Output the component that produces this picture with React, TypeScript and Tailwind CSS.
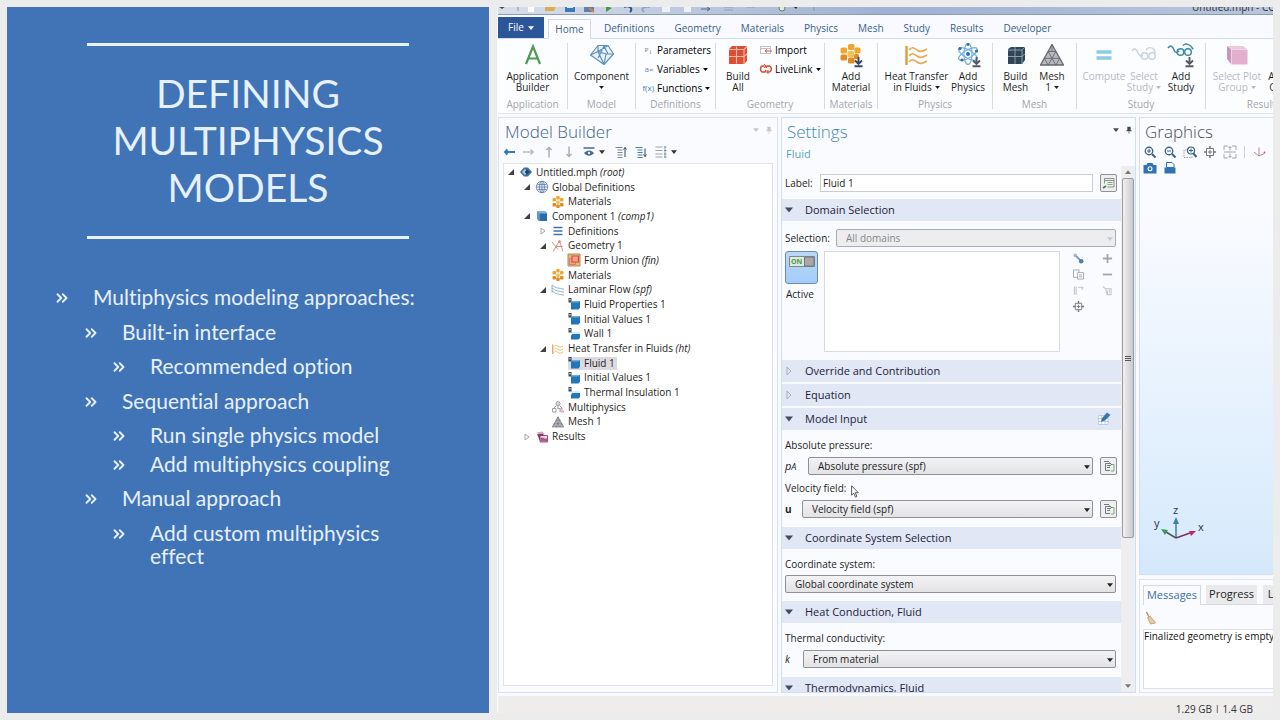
import type { ReactNode } from 'react';
import { ChevronsRight } from 'lucide-react';
import clsx from 'clsx';

type IconName = keyof typeof ICONS;

const ICONS = {
  builder: (
    <path d="M5 21 12 3.5 19 21M7.5 15.5h9" fill="none" stroke="#4f9a55" strokeWidth="2.2" />
  ),
  component: (
    <g fill="#eaf3fc" stroke="#5f8fbd" strokeWidth="1.2" strokeLinejoin="round">
      <path d="M.5 12 8 2.500h10L23.500 11 14 21.500z" />
      <path d="M.5 12 8 8.500l8 2.500 7.500 0M8 8.500 18 2.500M16 11l-2 10.500M8 8.500v0L14 21.500M8 2.500l0 6M8 15l6-12 4 8" fill="none" />
    </g>
  ),
  buildAll: (
    <g>
      <path d="M3 6l3-3h15v15l-3 3H3z" fill="#dd4f34" />
      <path d="M3 6.500h15M18 6.500v14.500M18 6.500l3-3M10.500 3.500v17M3 13.500h15l3-2.500" stroke="#f7b7a5" strokeWidth="1.1" fill="none" />
    </g>
  ),
  addMaterial: (
    <g>
      <g fill="#f0a52c">
        <rect x="9" y="1" width="6.500" height="6" rx="1.500" />
        <rect x="1.500" y="4.500" width="6.500" height="6" rx="1.500" />
        <rect x="15.500" y="4.500" width="6" height="6" rx="1.500" />
        <rect x="1.500" y="11.500" width="6.500" height="6" rx="1.500" fill="#e48a22" />
        <rect x="9" y="14.500" width="6.500" height="6" rx="1.500" fill="#e48a22" />
        <rect x="15" y="11" width="5" height="5" rx="1.500" fill="#e48a22" />
        <rect x="8.500" y="8" width="6.500" height="6" rx="1.500" fill="#f6c04d" />
      </g>
      <path d="M19.500 14v6M16 17.500l3.500 3.500 3.500-3.500M15.500 23.200h8" stroke="#36475f" strokeWidth="1.900" fill="none" />
    </g>
  ),
  heat: (
    <g fill="none" stroke="#e6ab4f" strokeWidth="1.600">
      <path d="M1.500 3v19" strokeWidth="2.400" stroke="#dc9d3c" />
      <path d="M4 7c3-4 5-2 8 0s5 2 10-1M4 13c3-4 5-2 8 0s5 2 10-1M4 19c3-4 5-2 8 0s5 2 10-1" />
    </g>
  ),
  addPhysics: (
    <g fill="none" stroke="#6fb0dc" strokeWidth="1.200">
      <ellipse cx="12" cy="11" rx="4" ry="10.500" />
      <ellipse cx="12" cy="11" rx="4" ry="10.500" transform="rotate(60 12 11)" />
      <ellipse cx="12" cy="11" rx="4" ry="10.500" transform="rotate(120 12 11)" />
      <g fill="#2f6ea8" stroke="none">
        <circle cx="12" cy="11" r="2" />
        <circle cx="4" cy="5.500" r="1.600" />
        <circle cx="20.500" cy="8" r="1.600" />
        <circle cx="6" cy="17" r="1.600" />
        <circle cx="12" cy="1.500" r="1.400" />
      </g>
      <path d="M20.500 14v6M17 17.500l3.500 3.500 3.500-3.500M16.500 23.200h8" stroke="#55585f" strokeWidth="1.900" />
    </g>
  ),
  buildMesh: (
    <g>
      <path d="M4 6l3-2h14v13l-3 4H4z" fill="#304657" />
      <path d="M4 7h14v14M18 7l3-3M11 4v17M4 13.500h14l3-2.500" stroke="#8fa6b5" strokeWidth="0.900" fill="none" />
    </g>
  ),
  mesh: (
    <g stroke="#66666e" strokeWidth="0.900" strokeLinejoin="round">
      <path d="M12 1.500 23.500 22H.5z" fill="#b9b9c1" strokeWidth="1.300" />
      <path d="M8.200 8.500h7.600M4.300 15.300h15.400M8.200 8.500 12 15.300l3.800-6.800M4.300 15.300 8.200 22l3.800-6.700 3.800 6.700 3.900-6.700M12 1.500v7" fill="none" />
    </g>
  ),
  compute: <path d="M4.500 9h15M4.500 15h15" stroke="#8fcbe2" strokeWidth="3.400" fill="none" />,
  selectStudy: (
    <g fill="none" stroke="#c9d3dd" strokeWidth="1.400">
      <path d="M0 8c3-4 5-1 6 2s3 4 5 2" />
      <circle cx="12.500" cy="13" r="3.200" />
      <circle cx="20" cy="13" r="3.200" />
      <path d="M14 7c2-3 5-3 8-1l1 4" />
    </g>
  ),
  addStudy: (
    <g fill="none" stroke="#3d8aa5" strokeWidth="1.500">
      <path d="M-1 5c3-4 5-1 6 2s3 3 5 1" />
      <circle cx="11.500" cy="9" r="3.300" />
      <circle cx="19" cy="9" r="3.300" />
      <path d="M14 2.500c2-2 4-2 7 0s2 4 3.500 3" />
      <path d="M20.500 14v6M17 17.500l3.500 3.500 3.500-3.500M16.500 23.200h8" stroke="#55585f" strokeWidth="1.900" />
    </g>
  ),
  plotGroup: (
    <g>
      <path d="M2 3l4 3v15l-4-5z" fill="#cf93ba" />
      <path d="M2 3h16l4 3H6z" fill="#edc9de" />
      <path d="M6.500 6.500H22.500V21.500H6.500z" fill="#e2afcf" />
    </g>
  ),
  params: (
    <g fontFamily="Liberation Serif" fontSize="17" fill="#77869a">
      <text x="1" y="17">P</text>
      <text x="13" y="21" fontSize="15">i</text>
    </g>
  ),
  importFile: (
    <g fill="none" strokeWidth="1.500">
      <path d="M1 5h20v14H1zM1 9h20" stroke="#b9a7ad" />
      <path d="M10 14h14M14 11l-4 3 4 3" stroke="#cf5a55" strokeWidth="2" />
    </g>
  ),
  livelink: (
    <g fill="none" stroke="#d64a35" strokeWidth="3">
      <path d="M9 6H4c-4 2-4 10 0 12h6l2-4M12 10l2-4h5c5 2 5 10 0 12h-5" />
      <path d="M8 2l4 4-4 4M17 14l-4 4 4 4" strokeWidth="2" />
    </g>
  ),
  root: (
    <g>
      <path d="M0 12 8 3h8l8 9-8 9H8z" fill="#3d6f9f" />
      <path d="M4 12l6-6 3 3-3 3 3 3-3 3z" fill="#a9cdea" />
      <path d="M13 7l6 5-6 5-3-5z" fill="#1f3f63" />
    </g>
  ),
  globe: (
    <g fill="none" stroke="#5f7fae" strokeWidth="1.600">
      <circle cx="12" cy="12" r="11.500" fill="#eaf1fa" />
      <ellipse cx="12" cy="12" rx="5" ry="11.500" />
      <path d="M12 .5v23M.5 12h23M3 7h18M3 17h18" />
    </g>
  ),
  materials: (
    <g fill="#f0a52c">
      <rect x="8.500" y="0" width="7" height="7" rx="2" />
      <rect x="1" y="4" width="7" height="7" rx="2" />
      <rect x="16" y="4" width="7" height="7" rx="2" />
      <rect x="8.500" y="9" width="7" height="7" rx="2" fill="#f6c04d" />
      <rect x="1" y="14" width="7" height="7" rx="2" fill="#e48a22" />
      <rect x="16" y="14" width="7" height="7" rx="2" fill="#e48a22" />
      <rect x="8.500" y="17" width="7" height="7" rx="2" fill="#e48a22" />
    </g>
  ),
  cube: (
    <g>
      <path d="M2 2h16l4 3v17H6l-4-4z" fill="#7db4df" />
      <path d="M2 2l4 4v16l-4-4z" fill="#5b9acb" />
      <path d="M7 7h15v15H7z" fill="#2c6ba6" />
    </g>
  ),
  lines: <path d="M3 5h18M3 12h18M3 19h18" stroke="#3c74a8" strokeWidth="3.400" fill="none" />,
  geometry: (
    <g fill="none" stroke="#d87a70" strokeWidth="1.700">
      <path d="M0 4l12 15M2 23 15 2l7 21M8 13h13" />
      <circle cx="15" cy="3" r="2" />
    </g>
  ),
  union: (
    <g>
      <path d="M0 0h24v24H0z" fill="#e3b679" stroke="#a8905f" strokeWidth="2" />
      <path d="M3 9h12v12H3z" fill="#f3a08b" stroke="#e0705a" strokeWidth="1.600" />
      <path d="M8 4h13v12H8z" fill="#f3a08b" stroke="#d8503c" strokeWidth="2.400" />
    </g>
  ),
  laminar: (
    <g fill="none" stroke="#86a9d1" strokeWidth="1.800">
      <path d="M0 3c5 0 6 5 11 5s6 2 13 2M0 9c5 0 6 5 11 5s6 2 13 2M0 15c5 0 6 5 11 5s6 2 13 2M0 3v14" />
    </g>
  ),
  domain: (
    <g>
      <path d="M6 9l3-3h15v13l-3 4H6z" fill="#2277b8" />
      <path d="M6 9l3-3h15l-3 3z" fill="#69addd" />
      <path d="M1 0h6v9H1zM3 2h2v3H3z" fill="#34465c" fillRule="evenodd" />
    </g>
  ),
  boundary: (
    <g>
      <path d="M6 8h18v8H6z" fill="#d9ebf7" />
      <path d="M6 15l3-3h15v8l-3 3H6z" fill="#2277b8" />
      <path d="M1 0h6v9H1zM3 2h2v3H3z" fill="#34465c" fillRule="evenodd" />
    </g>
  ),
  multi: (
    <g fill="none" stroke="#8b8b93" strokeWidth="1.600">
      <circle cx="12" cy="5" r="4" fill="#d5e3cf" />
      <path d="M9 9 3 15M15 9l6 6M12 9v6" />
      <path d="M1 15l7 0 0 7H1zM11 15h5v7" />
      <path d="M18 14v8h6z" stroke="#c77fa3" />
    </g>
  ),
  results: (
    <g>
      <path d="M1 3l12-2 4 5H5z" fill="#d9a4c3" />
      <path d="M2 6h13v14l-8-2z" fill="#8d3b6b" />
      <path d="M8 9h15v13H8z" fill="#e8d3e0" stroke="#75305a" strokeWidth="1.600" />
      <path d="M9 15c4-6 8 4 13-1v7H9z" fill="#b0568a" />
    </g>
  ),
  back: <path d="M24 12H3M9 7l-5 5 5 5" stroke="#3878b5" strokeWidth="4" fill="none" />,
  forward: <path d="M0 12h21M15 7l5 5-5 5" stroke="#b9bec6" strokeWidth="3.400" fill="none" />,
  up: <path d="M12 23V3M7 8l5-5 5 5" stroke="#aab0ba" strokeWidth="3" fill="none" />,
  down: <path d="M12 1v20M7 16l5 5 5-5" stroke="#aab0ba" strokeWidth="3" fill="none" />,
  eye: (
    <g>
      <path d="M1 4h22" stroke="#44698f" strokeWidth="3" />
      <path d="M2 14c6-7 14-7 20 0-6 7-14 7-20 0z" fill="#44698f" />
      <circle cx="12" cy="14" r="2.500" fill="#dfe9f4" />
    </g>
  ),
  collapse: (
    <g stroke="#7b8796" strokeWidth="2" fill="none">
      <path d="M1 3h14M5 8h10M5 13h10M5 18h10M5 23h10" />
      <path d="M20 22V3M17 7l3-4 3 4" stroke="#33475e" />
    </g>
  ),
  expand: (
    <g stroke="#3f7fb9" strokeWidth="2.400" fill="none">
      <path d="M1 3h14M5 8h10M5 13h10M5 18h10M5 23h10" />
      <path d="M20 5v16M17 17l3 4 3-4" stroke="#33475e" strokeWidth="2" />
    </g>
  ),
  columns: (
    <g stroke="#9299a5" strokeWidth="1.800" fill="none">
      <path d="M1 2h14M1 9h14M1 16h14M1 22h14M20 1v22" />
      <path d="M18 2h5M18 9h5M18 16h5M18 22h5" stroke="#5f7f9f" />
    </g>
  ),
  zoomIn: (
    <g fill="none" stroke="#3c5f87" strokeWidth="2.600">
      <circle cx="10" cy="10" r="7.500" />
      <path d="M16 16l7 7" strokeWidth="4" />
      <path d="M6 10h8M10 6v8" strokeWidth="2" />
    </g>
  ),
  zoomOut: (
    <g fill="none" stroke="#3c5f87" strokeWidth="2.600">
      <circle cx="10" cy="10" r="7.500" />
      <path d="M16 16l7 7" strokeWidth="4" />
      <path d="M6 10h8" strokeWidth="2" />
    </g>
  ),
  zoomBox: (
    <g fill="none" stroke="#3c5f87" strokeWidth="2.400">
      <path d="M5 8H0v15h16v-3" stroke="#7d8a99" strokeWidth="1.600" strokeDasharray="3 2" />
      <circle cx="14" cy="9" r="7" />
      <path d="M19 15l6 7" strokeWidth="4" />
      <path d="M10 9h8M14 5v8" strokeWidth="2" />
    </g>
  ),
  extents: (
    <g fill="none" stroke="#6d7178" strokeWidth="1.900">
      <path d="M5 5h14v14H5zM12 8v8M8 12h8" />
      <path d="M12 0v5M12 19v5M0 12h5M19 12h5" strokeWidth="3" />
    </g>
  ),
  fit: (
    <g fill="none" stroke="#8e9299" strokeWidth="1.600">
      <path d="M8 0H0v8M16 0h8v8M8 24H0v-8M16 24h8v-8M12 1v8M12 15v8M0 12h24M9 4l3-3 3 3M9 20l3 3 3-3" />
    </g>
  ),
  triad: (
    <g fill="none" stroke="#a0707c" strokeWidth="1.600">
      <path d="M12 20V3M12 20 2 12M12 20l11-5" />
      <circle cx="23" cy="13" r="1.800" fill="#d0566a" stroke="none" />
    </g>
  ),
  camera: (
    <g>
      <path d="M-1 6h6l2-4h10l2 4h6v17H-1z" fill="#2f73b4" />
      <circle cx="12" cy="13.500" r="5" fill="#fff" />
      <circle cx="12" cy="13.500" r="2.800" fill="#2f73b4" />
    </g>
  ),
  printer: (
    <g fill="#2f73b4">
      <path d="M5 1h11l4 4v6H5z" fill="#fff" stroke="#2f73b4" strokeWidth="2" />
      <path d="M1 11h22v12H1z" />
    </g>
  ),
  rename: (
    <g fill="none" stroke="#7e8b80" strokeWidth="1.800">
      <path d="M3 3h19v17H9M3 3v10M3 7h19" />
      <path d="M9 11h10M9 15h10" stroke="#71a96c" />
      <path d="M0 22l6-4" stroke="#4a7a4a" strokeWidth="3.400" />
    </g>
  ),
  goTo: (
    <g fill="none" stroke="#6d7178" strokeWidth="1.900">
      <path d="M2 3h10M5 7h9M8 11h6M8 15h6M5 21h9M5 7v14" />
      <path d="M16 9h6v13h-6" stroke="#6dab68" />
      <path d="M13 5l4 4-4 3" stroke="#44784a" />
    </g>
  ),
  paint: (
    <g>
      <circle cx="5" cy="5" r="4" fill="#a9b8c9" />
      <path d="M7 7l9 9" stroke="#7895b5" strokeWidth="4" />
      <circle cx="18" cy="18" r="5" fill="#4d7eb0" />
    </g>
  ),
  copy: (
    <g fill="#fff" stroke="#8a8f97" strokeWidth="1.600">
      <path d="M1 2h12v16H1z" />
      <path d="M10 8h13v14H10zM13 13h7M13 17h7" />
    </g>
  ),
  paste: (
    <g fill="none" stroke="#c3c6cc" strokeWidth="2.400">
      <path d="M3 3v18M7 3v18M11 5h12M20 5v6" />
    </g>
  ),
  plus: <path d="M12 2v20M2 12h20" stroke="#a4a7ad" strokeWidth="4" fill="none" />,
  minus: <path d="M2 12h20" stroke="#a4a7ad" strokeWidth="4" fill="none" />,
  broomOff: (
    <g fill="none" stroke="#c3c6cc" strokeWidth="2.200">
      <path d="M2 3l6 6M8 8h12v13h-9zM12 12v8M16 10v8" />
    </g>
  ),
  broom: (
    <g>
      <path d="M3 0l5 10" stroke="#a88b76" strokeWidth="2.400" />
      <path d="M5 11l5-3 11 14-10 2z" fill="#e8c9a6" stroke="#b78b62" strokeWidth="1.400" />
    </g>
  ),
  edit: (
    <g>
      <path d="M1 5h19v18H1zM1 11h19M1 17h19M7 5v18M14 5v18" fill="#fff" stroke="#9dbfdf" strokeWidth="1.400" />
      <path d="M6 18l2-8L18-1l7 5-11 11z" fill="#3c76ad" />
    </g>
  ),
  pin: <path d="M7 2h10v11h3v3h-7v7h-2v-7H4v-3h3z" fill="currentColor" />,
} satisfies Record<string, ReactNode>;

function Icon({ name, className }: { name: IconName; className?: string }) {
  return (
    <svg viewBox="0 0 24 24" aria-hidden="true" className={clsx('shrink-0 overflow-visible', className)}>
      {ICONS[name]}
    </svg>
  );
}

function Caret({ className }: { className?: string }) {
  return (
    <svg viewBox="0 0 8 5" aria-hidden="true" className={clsx('inline-block shrink-0', className)}>
      <path d="M0 0h8L4 5z" fill="currentColor" />
    </svg>
  );
}

/* ---------- slide ---------- */

const BULLETS = [
  { text: 'Multiphysics modeling approaches:', cls: 'pl-[46px]' },
  { text: 'Built-in interface', cls: 'pl-[75px] mt-3' },
  { text: 'Recommended option', cls: 'pl-[103px] mt-[11px]' },
  { text: 'Sequential approach', cls: 'pl-[75px] mt-3' },
  { text: 'Run single physics model', cls: 'pl-[103px] mt-[11px]' },
  { text: 'Add multiphysics coupling', cls: 'pl-[103px] mt-1.5' },
  { text: 'Manual approach', cls: 'pl-[75px] mt-[11px]' },
  { text: 'Add custom multiphysics effect', cls: 'pl-[103px] mt-3' },
];

function Slide() {
  return (
    <section className="w-[482px] shrink-0 bg-[#4173b7] pt-9 font-['Lato',sans-serif] text-[#e6f1fd] [font-variant-ligatures:none]">
      <h1 className="mx-20 border-y-[3px] border-[#e6f1fd] px-2 pt-6 pb-[25px] text-center text-[39px] leading-[47px] uppercase">
        Defining Multiphysics Models
      </h1>
      <ul className="mt-[46px] pr-[62px] text-[21px] leading-[23px]">
        {BULLETS.map((b) => (
          <li key={b.text} className={clsx('flex items-start', b.cls)}>
            <ChevronsRight className="mt-1 mr-[22px] size-[18px] shrink-0" strokeWidth={2.5} />
            <span>{b.text}</span>
          </li>
        ))}
      </ul>
    </section>
  );
}

/* ---------- ribbon ---------- */

const TABS = ['Definitions', 'Geometry', 'Materials', 'Physics', 'Mesh', 'Study', 'Results', 'Developer'];

function TitleBar() {
  return (
    <div className="flex h-2 items-end justify-between overflow-hidden border-b border-[#8b9bb5] bg-linear-to-r from-[#d9dfe9] via-[#9fb0d2] to-[#b9c6dd]">
      <svg viewBox="0 0 320 8" className="h-2 w-[320px]" aria-hidden="true">
        <path d="M0 0h8l-4 3z" fill="#444" />
        <path d="M20 0v5M316 0v5" stroke="#8894a8" />
        <path d="M30 0h6v6h-6z" fill="#fff" />
        <path d="M47 0h11l-2 5h-9z" fill="#e0ab4c" />
        <path d="M67 0h10v6H67z" fill="#3c79b8" />
        <path d="M69 0h6v2h-6z" fill="#dce9f6" />
        <path d="M86 0h10v6H86z" fill="#5b83ad" />
        <path d="M91 2l5 4" stroke="#d9803c" strokeWidth="2" />
        <path d="M108 0l6 2-6 4z" fill="#459a45" />
        <path d="M126 1c4-2 10 1 6 5" stroke="#31507c" strokeWidth="2" fill="none" />
        <path d="M152 1c-6-1-10 2-6 5" stroke="#8fa3c2" strokeWidth="2" fill="none" />
        <path d="M164 0h8v6h-8zM186 0h7v6h-7z" fill="#eef2f8" />
        <path d="M203 3h9M209 1l3 2-3 2" stroke="#5a6779" fill="none" />
        <path d="M226 1h9M248 1h9M226 4h9" stroke="#8fa0ba" />
        <circle cx="284" cy="2" r="3" fill="#dcebd9" stroke="#5d8a5a" />
        <path d="M295 0h5l-2 3z" fill="#222" />
      </svg>
      <span className="mr-[-12px] text-[10px] leading-[14px] whitespace-nowrap text-[#333]">Untitled.mph - COM</span>
    </div>
  );
}

function RibbonTabs() {
  return (
    <nav className="flex h-6 items-end border-b border-[#d5d9e3] text-[10px] text-[#3b5f8a]">
      <button className="mr-1 flex h-[21px] w-[46px] shrink-0 items-center justify-center gap-1 bg-[#2b569a] text-white">
        File <Caret className="h-1 w-1.5" />
      </button>
      <button className="-mb-px h-5 w-[43px] shrink-0 border border-b-0 border-[#d5d9e3] bg-[#fdfdff]">Home</button>
      <div className="ml-[13px] flex h-[19px] items-center gap-5">
        {TABS.map((t) => (
          <button key={t}>{t}</button>
        ))}
      </div>
    </nav>
  );
}

function Group({ label, width, children }: { label: string; width: string; children: ReactNode }) {
  return (
    <div className={clsx('flex h-[66px] shrink-0 flex-col border-r border-[#d8dbe3]', width)}>
      <div className="flex h-[54px] shrink-0">{children}</div>
      <div className="text-center text-[10px] leading-[14px] text-[#a3a5ab]">{label}</div>
    </div>
  );
}

type BigProps = { icon: IconName; lines: string[]; width: string; caret?: boolean; disabled?: boolean };

function BigButton({ icon, lines, width, caret, disabled }: BigProps) {
  return (
    <button
      disabled={disabled}
      className={clsx('flex shrink-0 flex-col items-center leading-[11px] whitespace-nowrap', width, disabled ? 'text-[#b6b9c0]' : 'text-[#1e1e22]')}
    >
      <Icon name={icon} className="mb-1 size-6" />
      {lines.map((line, i) => (
        <span key={line} className="flex min-h-[11px] items-center gap-[3px]">
          {line}
          {caret && i === lines.length - 1 && <Caret className="h-[3px] w-[5px]" />}
        </span>
      ))}
    </button>
  );
}

function Ribbon() {
  return (
    <div className="flex h-[75px] overflow-hidden border-b border-[#dfe3ec] bg-[#fcfdff] pt-1 text-[10px]">
      <Group label="Application" width="w-[70px]">
        <BigButton icon="builder" lines={['Application', 'Builder']} width="w-full" />
      </Group>
      <Group label="Model" width="w-[68px]">
        <BigButton icon="component" lines={['Component', '']} caret width="w-full" />
      </Group>
      <Group label="Definitions" width="w-20">
        <div className="flex flex-col gap-[5px] pl-2 leading-[14px]">
          <button className="flex items-center gap-[3px]">
            <Icon name="params" className="size-[10px]" /> Parameters
          </button>
          <button className="flex items-center gap-[3px]">
            <span className="w-[10px] text-[8px] text-[#6f8cad]">a=</span> Variables <Caret className="h-[3px] w-[5px]" />
          </button>
          <button className="flex items-center gap-[3px]">
            <span className="flex w-[10px] justify-end text-[8px] text-[#4f79a5]">f(x)</span> Functions
            <Caret className="h-[3px] w-[5px]" />
          </button>
        </div>
      </Group>
      <Group label="Geometry" width="w-[109px]">
        <BigButton icon="buildAll" lines={['Build', 'All']} width="w-11" />
        <div className="flex flex-col gap-[5px] leading-[14px]">
          <button className="flex items-center gap-[3px]">
            <Icon name="importFile" className="size-3" /> Import
          </button>
          <button className="flex items-center gap-[3px]">
            <Icon name="livelink" className="size-3" /> LiveLink <Caret className="h-[3px] w-[5px]" />
          </button>
        </div>
      </Group>
      <Group label="Materials" width="w-[53px]">
        <BigButton icon="addMaterial" lines={['Add', 'Material']} width="w-full" />
      </Group>
      <Group label="Physics" width="w-[115px]">
        <BigButton icon="heat" lines={['Heat Transfer', 'in Fluids']} caret width="ml-1 w-[69px]" />
        <BigButton icon="addPhysics" lines={['Add', 'Physics']} width="w-[34px]" />
      </Group>
      <Group label="Mesh" width="w-[84px]">
        <BigButton icon="buildMesh" lines={['Build', 'Mesh']} width="w-[45px]" />
        <BigButton icon="mesh" lines={['Mesh', '1']} caret width="w-7" />
      </Group>
      <Group label="Study" width="w-[129px]">
        <BigButton icon="compute" lines={['Compute']} disabled width="w-[54px]" />
        <BigButton icon="selectStudy" lines={['Select', 'Study']} caret disabled width="w-[26px]" />
        <BigButton icon="addStudy" lines={['Add', 'Study']} width="w-12" />
      </Group>
      <Group label="Results" width="w-[116px]">
        <BigButton icon="plotGroup" lines={['Select Plot', 'Group']} caret disabled width="w-[62px]" />
        <BigButton icon="plotGroup" lines={['Add Plot', 'Group']} caret width="w-10" />
      </Group>
    </div>
  );
}

/* ---------- model builder ---------- */

type Node = { depth: 0 | 1 | 2 | 3; icon: IconName; label: string; tag?: string; open?: boolean; selected?: boolean };

const NODES: Node[] = [
  { depth: 0, icon: 'root', label: 'Untitled.mph', tag: 'root', open: true },
  { depth: 1, icon: 'globe', label: 'Global Definitions', open: true },
  { depth: 2, icon: 'materials', label: 'Materials' },
  { depth: 1, icon: 'cube', label: 'Component 1', tag: 'comp1', open: true },
  { depth: 2, icon: 'lines', label: 'Definitions', open: false },
  { depth: 2, icon: 'geometry', label: 'Geometry 1', open: true },
  { depth: 3, icon: 'union', label: 'Form Union', tag: 'fin' },
  { depth: 2, icon: 'materials', label: 'Materials' },
  { depth: 2, icon: 'laminar', label: 'Laminar Flow', tag: 'spf', open: true },
  { depth: 3, icon: 'domain', label: 'Fluid Properties 1' },
  { depth: 3, icon: 'domain', label: 'Initial Values 1' },
  { depth: 3, icon: 'boundary', label: 'Wall 1' },
  { depth: 2, icon: 'heat', label: 'Heat Transfer in Fluids', tag: 'ht', open: true },
  { depth: 3, icon: 'domain', label: 'Fluid 1', selected: true },
  { depth: 3, icon: 'domain', label: 'Initial Values 1' },
  { depth: 3, icon: 'boundary', label: 'Thermal Insulation 1' },
  { depth: 2, icon: 'multi', label: 'Multiphysics' },
  { depth: 2, icon: 'mesh', label: 'Mesh 1' },
  { depth: 1, icon: 'results', label: 'Results', open: false },
];

const INDENT = ['pl-[3px]', 'pl-[19px]', 'pl-[35px]', 'pl-[51px]'];

function Toggle({ open }: { open?: boolean }) {
  if (open === undefined) return <span className="w-2" />;
  return (
    <button aria-label={open ? 'Collapse' : 'Expand'} className="w-2">
      <svg viewBox="0 0 8 8" className="size-2">
        {open ? <path d="M7 1v6H1z" fill="#404040" /> : <path d="M2 1l4 3-4 3z" fill="none" stroke="#a5a5a5" />}
      </svg>
    </button>
  );
}

function ModelBuilder() {
  return (
    <section className="flex w-[280px] shrink-0 flex-col border border-[#d9e1ee] bg-[#fafbff] px-1 pb-1.5">
      <header className="flex items-start justify-between pt-0.5 text-[#c3c6cc]">
        <h2 className="pl-0.5 text-[17px] leading-6 font-light text-[#3f6389]">Model Builder</h2>
        <div className="flex items-center gap-1.5 pt-1.5">
          <Caret className="h-1 w-1.5" />
          <Icon name="pin" className="size-2" />
        </div>
      </header>
      <div className="mb-[3px] flex h-4 items-center gap-2 text-[#333]">
        <Icon name="back" className="size-3" />
        <Icon name="forward" className="size-3" />
        <Icon name="up" className="size-3" />
        <Icon name="down" className="size-3" />
        <Icon name="eye" className="size-3" />
        <Caret className="mr-0.5 -ml-1 h-1 w-1.5" />
        <Icon name="collapse" className="size-3" />
        <Icon name="expand" className="size-3" />
        <Icon name="columns" className="size-3" />
        <Caret className="-ml-1 h-1 w-1.5" />
      </div>
      <div className="flex-1 border border-[#e0e3ea] bg-white pt-px">
        <ul className="grid h-[279px] auto-rows-fr text-[10px] text-[#1e1e22]">
          {NODES.map((n, i) => (
            <li key={i} className={clsx('flex items-center', INDENT[n.depth])}>
              <Toggle open={n.open} />
              <span className={clsx('ml-[5px] flex items-center gap-1 pr-0.5', n.selected && 'bg-[#dcd9e1]')}>
                <Icon name={n.icon} className="size-3" />
                <span className="leading-[13px] whitespace-nowrap">
                  {n.label} {n.tag && <i>({n.tag})</i>}
                </span>
              </span>
            </li>
          ))}
        </ul>
      </div>
    </section>
  );
}

/* ---------- settings ---------- */

function SectionHeader({ title, open, children }: { title: string; open?: boolean; children?: ReactNode }) {
  return (
    <button className="flex h-[22px] w-full shrink-0 items-center bg-[#e1e7f5] pr-[11px] pl-[3px] text-[11px] text-[#22223a]">
      <svg viewBox="0 0 8 8" className="mr-3 size-2" aria-hidden="true">
        {open ? <path d="M0 1.500h8L4 6.500z" fill="#3f4c63" /> : <path d="M2 0l4 4-4 4z" fill="none" stroke="#b0aebf" />}
      </svg>
      <span className="flex-1 text-left">{title}</span>
      {children}
    </button>
  );
}

function Select({ id, value, disabled }: { id: string; value: string; disabled?: boolean }) {
  return (
    <span className="relative flex h-[18px] min-w-0 flex-1 text-[#222]">
      <select
        id={id}
        disabled={disabled}
        className={clsx(
          'w-full appearance-none rounded-[2px] border pl-[9px] leading-4',
          disabled ? 'border-[#a9acb2] bg-[#ededf0] text-[#85868b]' : 'border-[#8f9197] bg-linear-to-b from-[#f3f2f5] to-[#e3e3e6]',
        )}
      >
        <option>{value}</option>
      </select>
      <Caret className={clsx('pointer-events-none absolute top-2 right-[3px] h-1 w-1.5', disabled && 'text-[#c9cacf]')} />
    </span>
  );
}

function ToolButton({ icon, label }: { icon: IconName; label: string }) {
  return (
    <button
      aria-label={label}
      className="ml-[7px] flex h-[18px] w-[17px] shrink-0 items-center justify-center rounded-[2px] border border-[#8f9197] bg-[#efeff1]"
    >
      <Icon name={icon} className="size-3" />
    </button>
  );
}

const SELECTION_TOOLS: { icon: IconName; label: string }[] = [
  { icon: 'paint', label: 'Create selection' },
  { icon: 'plus', label: 'Add' },
  { icon: 'copy', label: 'Copy' },
  { icon: 'minus', label: 'Remove' },
  { icon: 'paste', label: 'Paste' },
  { icon: 'broomOff', label: 'Clear' },
  { icon: 'extents', label: 'Zoom to selection' },
];

function Settings() {
  return (
    <section className="relative flex w-[355px] shrink-0 flex-col overflow-hidden border border-[#cfdff0] bg-[#fafbff] text-[10px] text-[#1e1e22]">
      <header className="flex items-start justify-between px-[5px] pt-0.5">
        <h2 className="text-[17px] leading-6 font-light text-[#3e89a8]">Settings</h2>
        <div className="flex items-center gap-1.5 pt-1.5 text-[#444b55]">
          <Caret className="h-1 w-1.5" />
          <Icon name="pin" className="mr-[-3px] size-2" />
        </div>
      </header>
      <p className="mb-[3px] px-1 text-[11px] leading-[19px] text-[#5aa3bd]">Fluid</p>
      <div className="flex min-h-0 flex-1">
        <div className="flex min-w-0 flex-1 flex-col overflow-hidden">
          <div className="flex items-center pt-2 pr-1 pb-[7px] pl-[3px]">
            <label htmlFor="label" className="w-[35px]">
              Label:
            </label>
            <input id="label" defaultValue="Fluid 1" className="h-[18px] min-w-0 flex-1 border border-[#c9ccd3] bg-white px-0.5" />
            <ToolButton icon="rename" label="Rename" />
          </div>

          <SectionHeader title="Domain Selection" open />
          <div className="px-[3px] pt-2 pb-2">
            <div className="flex items-center pr-0.5">
              <label htmlFor="selection" className="w-[51px]">
                Selection:
              </label>
              <Select id="selection" value="All domains" disabled />
            </div>
            <div className="mt-1 flex pr-1">
              <div className="w-[39px]">
                <button
                  id="active"
                  aria-pressed="true"
                  aria-label="Active"
                  className="flex size-[33px] justify-center rounded-[3px] border border-[#6d8bb0] bg-linear-to-b from-[#b9d8f7] to-[#a3cdf8] pt-1"
                >
                  <svg viewBox="0 0 26 11" className="h-[11px] w-[26px]" aria-hidden="true">
                    <path d="M.5.5h25v10H.5z" fill="#dcebdc" stroke="#7f8c86" />
                    <path d="M15.500 1h9.500v9h-9.500z" fill="#a9a5a8" stroke="#77757a" />
                    <text x="2" y="8" fontSize="7" fontWeight="700" fill="#4d9a55">ON</text>
                  </svg>
                </button>
                <label htmlFor="active" className="mt-[3px] block pl-px leading-[14px]">
                  Active
                </label>
              </div>
              <div className="h-[101px] flex-1 border border-[#d9dbe2] bg-white" />
              <div className="ml-3 grid w-[42px] grid-cols-2 content-start gap-x-4 gap-y-1 pt-0.5">
                {SELECTION_TOOLS.map((t) => (
                  <button key={t.icon} aria-label={t.label} className="flex h-3 justify-center">
                    <Icon name={t.icon} className="size-[11px]" />
                  </button>
                ))}
              </div>
            </div>
          </div>

          <div className="flex flex-col gap-0.5">
            <SectionHeader title="Override and Contribution" />
            <SectionHeader title="Equation" />
            <SectionHeader title="Model Input" open>
              <Icon name="edit" className="size-3" />
            </SectionHeader>
          </div>
          <div className="px-[3px] pt-2 pb-[9px]">
            <label htmlFor="pressure" className="block leading-[14px]">
              Absolute pressure:
            </label>
            <div className="mt-[5px] flex items-center pr-px">
              <i className="w-[23px] text-[11px]">
                p<span className="text-[9px]">A</span>
              </i>
              <Select id="pressure" value="Absolute pressure (spf)" />
              <ToolButton icon="goTo" label="Go to source" />
            </div>
            <label htmlFor="velocity" className="mt-1.5 block leading-[14px]">
              Velocity field:
            </label>
            <div className="mt-[5px] flex items-center pr-px">
              <b className="w-[17px]">u</b>
              <Select id="velocity" value="Velocity field (spf)" />
              <ToolButton icon="goTo" label="Go to source" />
            </div>
          </div>

          <SectionHeader title="Coordinate System Selection" open />
          <div className="px-[3px] pt-2 pb-2">
            <label htmlFor="coordinates" className="block leading-[14px]">
              Coordinate system:
            </label>
            <div className="mt-1 flex pr-0.5">
              <Select id="coordinates" value="Global coordinate system" />
            </div>
          </div>

          <SectionHeader title="Heat Conduction, Fluid" open />
          <div className="px-[3px] pt-2 pb-[9px]">
            <label htmlFor="conductivity" className="block leading-[14px]">
              Thermal conductivity:
            </label>
            <div className="mt-[5px] flex items-center pr-0.5">
              <i className="w-[18px]">k</i>
              <Select id="conductivity" value="From material" />
            </div>
          </div>
          <SectionHeader title="Thermodynamics, Fluid" open />
        </div>

        <div className="flex w-[14px] shrink-0 flex-col items-center bg-[#eeedf0] text-[#777]">
          <Caret className="my-1 h-1 w-1.5 rotate-180" />
          <div className="flex h-[360px] w-3 flex-col items-center justify-center gap-px rounded-[2px] border border-[#9b9ca2] bg-linear-to-r from-[#f1f1f3] to-[#c9c9ce]">
            <span className="h-px w-1.5 bg-[#555]" />
            <span className="h-px w-1.5 bg-[#555]" />
            <span className="h-px w-1.5 bg-[#555]" />
          </div>
          <Caret className="mt-auto mb-1 h-1 w-1.5" />
        </div>
      </div>

      {/* mouse pointer */}
      <svg viewBox="0 0 8 13" className="absolute top-[367px] left-[69px] h-[13px] w-2" aria-hidden="true">
        <path d="M.6.8v9.400l2.200-2 1.600 3.900 1.500-.6-1.600-3.800h3z" fill="#fff" stroke="#333" strokeWidth=".8" />
      </svg>
    </section>
  );
}

/* ---------- graphics ---------- */

function Graphics() {
  return (
    <div className="flex min-w-0 flex-1 flex-col gap-1 overflow-hidden">
      <section className="flex flex-1 flex-col border border-r-0 border-[#d3dfee] bg-linear-to-b from-[#fafbff] from-20% to-[#d5e9fc]">
        <h2 className="pt-0.5 pl-[5px] text-[17px] leading-6 font-light text-[#4a4f5c]">Graphics</h2>
        <div className="flex h-4 items-center gap-2 pl-1">
          <Icon name="zoomIn" className="size-3" />
          <Icon name="zoomOut" className="size-3" />
          <Icon name="zoomBox" className="size-3" />
          <Icon name="extents" className="size-3" />
          <Icon name="fit" className="size-3" />
          <span className="h-3 w-px bg-[#cfd2d9]" />
          <Icon name="triad" className="size-3" />
        </div>
        <div className="flex h-4 items-center gap-2 pl-1">
          <Icon name="camera" className="size-3" />
          <Icon name="printer" className="size-3" />
        </div>
        <svg viewBox="0 0 56 36" className="mt-auto mb-8 ml-[13px] h-9 w-14" aria-hidden="true">
          <g fontSize="11" fill="#2b3340">
            <text x="20" y="8">z</text>
            <text x="1" y="21">y</text>
            <text x="45" y="25">x</text>
          </g>
          <g strokeWidth="1.500">
            <path d="M23 32V16" stroke="#3c7fa8" />
            <path d="M23 11l-3 7h6z" fill="#3c7fa8" />
            <path d="M23 32 13 26" stroke="#4a5a50" />
            <path d="M8 23l7 1-3 5z" fill="#3f9a55" />
            <path d="M23 32l14-5" stroke="#7c2f5a" />
            <path d="M43 25l-7 0 2 5z" fill="#c9245e" />
          </g>
        </svg>
      </section>
      <section className="h-[114px] shrink-0 border border-r-0 border-[#dfe3ec] bg-[#fafbff] pt-[5px] pl-[3px] text-[11px] whitespace-nowrap">
        <div className="flex h-5 border-b border-[#d5d9e3]">
          <button className="-mb-px w-[58px] shrink-0 border border-b-0 border-[#d5d9e3] bg-[#fafbff] text-[#3b6ea5]">Messages</button>
          <button className="ml-[5px] w-[51px] shrink-0 bg-[#eaeaed] text-[#222]">Progress</button>
          <button className="ml-1.5 w-7 shrink-0 bg-[#eaeaed] text-[#222]">Log</button>
        </div>
        <Icon name="broom" className="mt-[7px] mb-[5px] ml-0.5 size-3" />
        <div className="h-[60px] border border-r-0 border-[#dcdfe6] bg-white text-[10px] leading-[13px] text-[#111]">
          Finalized geometry is empty.
        </div>
      </section>
    </div>
  );
}

export default function App() {
  return (
    <main className="flex h-screen gap-2 overflow-hidden bg-[#ececec] p-[7px]">
      <Slide />
      <div className="flex min-w-0 flex-1 flex-col overflow-hidden bg-[#f8faff] pl-px font-['Open_Sans','Noto_Sans',sans-serif]">
        <TitleBar />
        <RibbonTabs />
        <Ribbon />
        <div className="flex min-h-0 flex-1 gap-[3px] py-[3px]">
          <ModelBuilder />
          <Settings />
          <Graphics />
        </div>
        <footer className="flex h-[17px] shrink-0 justify-end overflow-hidden bg-[#efecec] pt-1.5 pr-5 text-[10px] text-[#333]">
          1.29 GB | 1.4 GB
        </footer>
      </div>
    </main>
  );
}
